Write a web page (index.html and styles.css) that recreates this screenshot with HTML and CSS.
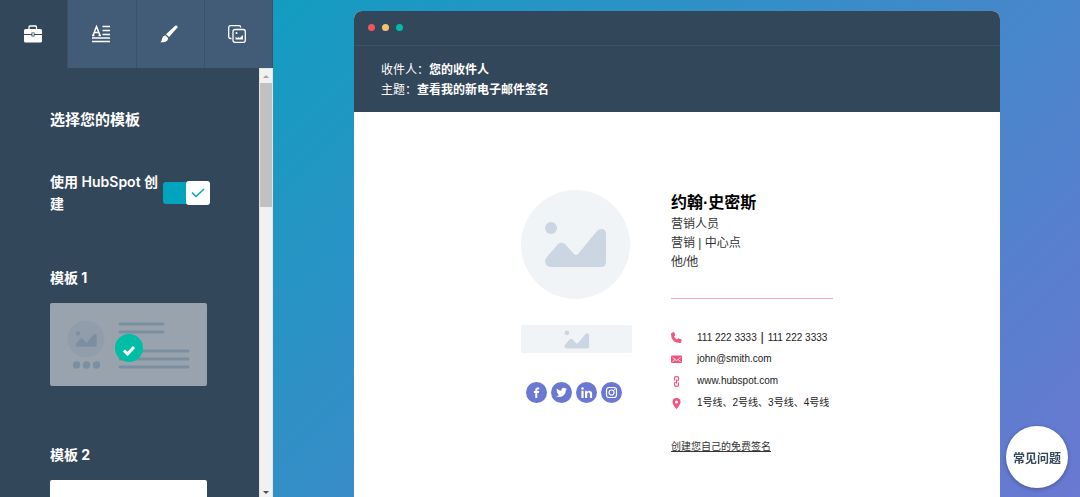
FILE: index.html
```html
<!DOCTYPE html>
<html lang="zh-CN">
<head>
    <meta charset="UTF-8">
    <meta name="viewport" content="width=device-width, initial-scale=1.0">
    <title>电子邮件签名生成器</title>
    <link rel="stylesheet" href="styles.css">
</head>
<body>
    <svg class="symbols" aria-hidden="true">
        <symbol id="placeholder" viewBox="0 0 62 47">
            <circle cx="6" cy="7" r="6"/>
            <path d="M5 46h51q5 0 5-5V13q0-5-5-5-2 0-4 2L33 33q-2 2-4 0L20 23q-4-3-7 0L1 37q-3 7 4 9z"/>
        </symbol>
    </svg>
    <aside class="sidebar">
        <nav class="tabs">
            <button class="tab active" aria-label="模板">
                <svg width="18" height="18" viewBox="0 0 18 18">
                    <path d="M5 4.5V2Q5 1 6 1h5.500q1 0 1 1v2.500" fill="none" stroke="#fff" stroke-width="1.3"/>
                    <path d="M1.500 4h15Q18 4 18 5.500V9h-7.500V7.500h-3V9H0V5.500Q0 4 1.500 4zM0 10h7.500v1.500h3V10H18v6q0 1.500-1.500 1.500h-15Q0 17.500 0 16z" fill="#fff"/>
                    <rect x="8.400" y="8" width="1.300" height="2.800" fill="#fff"/>
                </svg>
            </button>
            <button class="tab" aria-label="文字">
                <svg width="18" height="18" viewBox="0 0 18 18" fill="none" stroke="#fff">
                    <path d="M1 10.500 4.500 1.500 8 10.500M2.200 7.500h4.700M0 10.500h2.500M6.500 10.500H9" stroke-width="1.5"/>
                    <path d="M10.500 1.500H18M10.500 5.500H18M10.500 9.500H18M0 13h18M0 16.500h18" stroke-width="1.3"/>
                </svg>
            </button>
            <button class="tab" aria-label="样式">
                <svg width="18" height="18" viewBox="0 0 18 18" fill="#fff">
                    <path d="M15.500.500Q18 0 17.500 2.500L9 12 6 9.300z"/>
                    <path d="m5.200 10.300 2.900 2.600q0 3-3 3.800-2 .700-4.700.500Q2 16 2 14q.500-3 3.200-3.700z"/>
                </svg>
            </button>
            <button class="tab" aria-label="图片">
                <svg width="18" height="18" viewBox="0 0 18 18" fill="none" stroke="#fff" stroke-width="1.3">
                    <path d="M3.500 13.500h-1Q.7 13.500.7 11.500v-9Q.7.7 2.500.7H11q1.700 0 1.700 1.800"/>
                    <rect x="5" y="4.500" width="12.300" height="12.800" rx="2"/>
                    <circle cx="8.500" cy="8" r="1" fill="#fff" stroke="none"/>
                    <path d="M7.500 14.500V12l2 1 1.200-1 1 1L15 10v4.500z" fill="#fff" stroke="none"/>
                </svg>
            </button>
        </nav>
        <div class="panel">
            <div class="panel-content">
                <h2>选择您的模板</h2>
                <label class="toggle-row">
                    <span>使用 HubSpot 创建</span>
                    <input type="checkbox" class="toggle-input" checked>
                    <span class="toggle">
                        <svg width="14" height="10" viewBox="0 0 14 10"><path d="m1 4.500 4 4L13 1" fill="none" stroke="#00a4bd" stroke-width="1.5"/></svg>
                    </span>
                </label>
                <h3>模板 1</h3>
                <button class="template selected" aria-label="模板 1">
                    <svg viewBox="0 0 157 83">
                        <circle cx="36" cy="36" r="18.5" fill="#919daa"/>
                        <use href="#placeholder" x="25" y="28" width="23" height="16" fill="#7c8fa1"/>
                        <g fill="#7c8fa1">
                            <circle cx="26.5" cy="62" r="3.7"/><circle cx="36.5" cy="62" r="3.7"/><circle cx="46.5" cy="62" r="3.7"/>
                        </g>
                        <path d="M70 21h43M70 29h43M70 48h68M70 56h68M70 64h68" stroke="#7c8fa1" stroke-width="3" stroke-linecap="round"/>
                        <circle cx="79" cy="45" r="14" fill="#00bda5"/>
                        <path d="m74 47.500 3.500 3.500 6.500-7" fill="none" stroke="#fff" stroke-width="3"/>
                    </svg>
                </button>
                <h3>模板 2</h3>
                <button class="template" aria-label="模板 2"></button>
            </div>
            <div class="scrollbar">
                <svg width="12" height="14" viewBox="0 0 12 14"><path d="M3 9h6L6 6z" fill="#a3a3a3"/></svg>
                <div class="thumb"></div>
                <svg width="12" height="10" viewBox="0 0 12 10"><path d="M3 4h6L6 7z" fill="#505050"/></svg>
            </div>
        </div>
    </aside>
    <main>
        <section class="mail">
            <header>
                <div class="window-dots"><i class="red"></i><i class="yellow"></i><i class="green"></i></div>
                <div class="mail-info">
                    <p>收件人：<strong>您的收件人</strong></p>
                    <p>主题：<strong>查看我的新电子邮件签名</strong></p>
                </div>
            </header>
            <div class="signature">
                <div class="media">
                    <div class="avatar"><svg width="62" height="47"><use href="#placeholder"/></svg></div>
                    <div class="logo"><svg width="26" height="19"><use href="#placeholder"/></svg></div>
                    <div class="social">
                        <a href="#" aria-label="Facebook"><svg viewBox="0 0 21 21"><path d="M9.300 16v-5H7.800V9h1.500V7.700Q9.300 5.400 11.600 5.400h1.600v1.900h-1q-.9 0-.9.9V9h1.900l-.3 2h-1.600v5z"/></svg></a>
                        <a href="#" aria-label="Twitter"><svg viewBox="0 0 21 21"><path d="M15.900 7.100q-.5.700-1.100 1.100c.1 4.500-4.500 8.600-9.600 5.900q1.800.1 3.200-1-1.500-.2-2-1.600h1q-1.700-.6-1.800-2.300l1 .3Q4.800 8 5.900 6.400q1.900 2.200 4.600 2.300c-.5-2.500 2.300-3.700 3.800-2.200l1.400-.5-.9 1.200z"/></svg></a>
                        <a href="#" aria-label="LinkedIn"><svg viewBox="0 0 21 21"><circle cx="6.500" cy="6.500" r="1.300"/><path d="M5.400 8.800h2.200V16H5.400zM9 8.800h2.100v1c1-1.600 5-1.800 5 1.800V16h-2.200v-3.800c0-2.200-2.700-2-2.700 0V16H9z"/></svg></a>
                        <a href="#" aria-label="Instagram"><svg viewBox="0 0 21 21"><g fill="none" stroke="#fff" stroke-width="1.2"><rect x="5.500" y="5.500" width="10" height="10" rx="2.500"/><circle cx="10.500" cy="10.500" r="2.500"/></g><circle cx="13.500" cy="7.500" r=".7"/></svg></a>
                    </div>
                </div>
                <div class="details">
                    <h1>约翰·史密斯</h1>
                    <p>营销人员</p>
                    <p>营销 | 中心点</p>
                    <p>他/他</p>
                    <hr>
                    <ul class="contacts">
                        <li><svg width="11" height="11" viewBox="0 0 11 11"><path d="M.5 1 2.500 0q.6 0 .8.500l.9 2.200q.1.500-.2.800l-1 .9q1 2 3 3.100l1-1q.4-.3.9-.1l2.400 1q.6.300.4.900L10 10.500Q9.700 11 9 11 0 10.500 0 2q0-.7.500-1z"/></svg><span>111 222 3333 <span class="bar">|</span> 111 222 3333</span></li>
                        <li><svg width="11" height="11" viewBox="0 0 11 11"><rect y="1.500" width="11" height="7.500" rx="1"/><path d="m1.500 3.500 4 3 4-3M1.500 7.500 4 5.500M9.500 7.500 7 5.500" fill="none" stroke="#fff" stroke-width=".8"/></svg><span>john@smith.com</span></li>
                        <li><svg width="11" height="11" viewBox="0 0 11 11"><path d="M3.500 4.500V2q0-1.400 1.400-1.400h1.200Q7.500.6 7.500 2v1.500q0 1-1 1.500M7.500 6.500V9q0 1.400-1.400 1.400H4.900Q3.500 10.400 3.500 9V7.500q0-1 1-1.500M5.500 3.500v4" fill="none" stroke="#f2547d" stroke-width="1.2"/></svg><span>www.hubspot.com</span></li>
                        <li><svg width="11" height="11" viewBox="0 0 11 11"><path fill-rule="evenodd" d="M5.500 11Q1.500 6.500 1.500 4a4 4 0 0 1 8 0q0 2.500-4 7zM5.500 2.500a1.500 1.500 0 1 0 0 3 1.500 1.500 0 0 0 0-3z"/></svg><span>1号线、2号线、3号线、4号线</span></li>
                    </ul>
                    <a href="#" class="create-link">创建您自己的免费签名</a>
                </div>
            </div>
        </section>
    </main>
    <button class="faq">常见问题</button>
</body>
</html>
```
FILE: styles.css
```css
* {
    box-sizing: border-box;
}
body {
    display: flex;
    height: 100vh;
    margin: 0;
    overflow: hidden;
    font-family: "Liberation Sans", "Noto Sans CJK SC", sans-serif;
    background: linear-gradient(135deg, #00a4bd, #6a78d1);
}
h1, h2, h3, p, ul {
    margin: 0;
    padding: 0;
}
button {
    padding: 0;
    border: none;
    font-family: inherit;
    cursor: pointer;
}
svg {
    display: block;
    flex-shrink: 0;
}
.symbols {
    position: absolute;
    width: 0;
    height: 0;
}

/* sidebar */
.sidebar {
    display: flex;
    flex-direction: column;
    flex: 0 0 273px;
    background: #33475b;
    color: #fff;
}
.tabs {
    display: flex;
    flex: 0 0 68px;
}
.tab {
    display: flex;
    flex: 1;
    align-items: center;
    justify-content: center;
    padding-right: 2px;
    background: #425b76;
    border-right: 1px solid #3b5169;
}
.tab.active {
    background: #33475b;
}
.panel {
    display: flex;
    flex: 1;
    min-height: 0;
}
.panel-content {
    flex: 1;
    padding: 40px 49px 0 50px;
    overflow: hidden;
    font-family: Inter, "Noto Sans CJK SC", sans-serif;
}
.panel h2 {
    font-size: 15px;
    line-height: 24px;
}
.panel h3 {
    font-size: 14px;
    line-height: 22px;
    margin-bottom: 14px;
}
.toggle-row {
    display: flex;
    align-items: center;
    margin: 39px 0 52px;
    font-size: 14px;
    font-weight: 600;
    line-height: 22px;
}
.toggle-row span:first-child {
    flex: 1;
}
.toggle-input {
    position: absolute;
    opacity: 0;
}
.toggle {
    display: flex;
    align-items: center;
    justify-content: flex-end;
    width: 47px;
    height: 22px;
    border-radius: 3px;
    background: #00a4bd;
}
.toggle svg {
    box-sizing: content-box;
    padding: 7px 5px;
    border-radius: 3px;
    background: #fff;
}
.template {
    display: block;
    width: 157px;
    height: 83px;
    margin-bottom: 58px;
    border-radius: 2px;
    background: #fff;
}
.template.selected {
    background: #99a3ad;
}
.scrollbar {
    display: flex;
    flex-direction: column;
    width: 14px;
    border: 1px solid #e4e4e4;
    border-bottom: none;
    background: #f1f1f1;
}
.thumb {
    height: 124px;
    margin-bottom: auto;
    background: #c1c1c1;
}

/* mail preview */
main {
    flex: 1;
    padding: 11px 80px 0 81px;
}
.mail {
    display: flex;
    flex-direction: column;
    height: 100%;
    border-radius: 8px 8px 0 0;
    overflow: hidden;
    background: #fff;
}
.mail header {
    background: #33475b;
    color: #fff;
}
.window-dots {
    display: flex;
    gap: 7px;
    padding: 13px 14px 14px;
    border-bottom: 1px solid #3e5266;
}
.window-dots i {
    width: 7px;
    height: 7px;
    border-radius: 50%;
}
.red {
    background: #f2545b;
}
.yellow {
    background: #f5c26b;
}
.green {
    background: #00bda5;
}
.mail-info {
    padding: 14px 27px 12px;
    font-size: 12px;
    line-height: 20px;
}
.signature {
    display: flex;
    justify-content: center;
    gap: 39px;
    padding-top: 78px;
}
.media {
    width: 111px;
}
.avatar, .logo {
    display: flex;
    align-items: center;
    justify-content: center;
    background: #f0f4f7;
    fill: #cbd6e2;
}
.avatar {
    width: 109px;
    height: 109px;
    border-radius: 50%;
}
.logo {
    height: 28px;
    margin: 26px 0 29px;
    border-radius: 2px;
}
.social {
    display: flex;
    gap: 4px;
    padding-left: 5px;
}
.social a {
    width: 21px;
    height: 21px;
    border-radius: 50%;
    background: #6a78d1;
    fill: #fff;
}
.details {
    width: 162px;
    font-size: 12px;
    line-height: 19px;
    color: #333;
    white-space: nowrap;
}
.details h1 {
    font-size: 16px;
    line-height: 25px;
    color: #000;
}
.details hr {
    height: 1px;
    margin: 26px 0 27px;
    border: none;
    background: #f8a9be;
}
.contacts {
    list-style: none;
    font-size: 10px;
    line-height: 22px;
    color: #222;
}
.contacts li {
    display: flex;
    align-items: center;
    gap: 15px;
    height: 22px;
}
.contacts svg {
    fill: #f2547d;
}
.bar {
    padding: 0 1px;
    font-size: 13px;
}
.create-link {
    display: block;
    margin-top: 23px;
    font-size: 10px;
    color: #333;
}

.faq {
    position: fixed;
    right: 12px;
    bottom: 9px;
    width: 62px;
    height: 62px;
    border-radius: 50%;
    background: #fff;
    box-shadow: 0 1px 4px rgba(0, 0, 0, 0.3);
    font-size: 12px;
    font-weight: bold;
    color: #33475b;
}
```
